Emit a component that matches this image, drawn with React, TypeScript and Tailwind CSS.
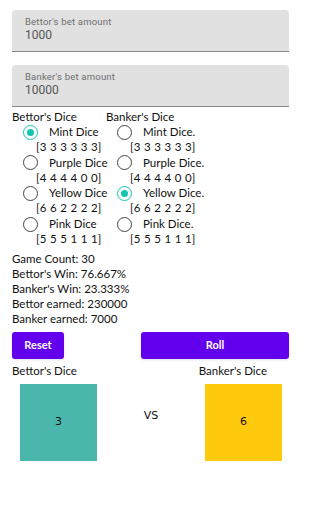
import React from "react";

const DICE = [
  { name: "Mint Dice", faces: "[3 3 3 3 3 3]" },
  { name: "Purple Dice", faces: "[4 4 4 4 0 0]" },
  { name: "Yellow Dice", faces: "[6 6 2 2 2 2]" },
  { name: "Pink Dice", faces: "[5 5 5 1 1 1]" },
];

const STATS = [
  "Game Count: 30",
  "Bettor's Win: 76.667%",
  "Banker's Win: 23.333%",
  "Bettor earned: 230000",
  "Banker earned: 7000",
];

function TextField({ label, value }: { label: string; value: string }) {
  return (
    <div className="h-[42px] rounded-t-[4px] border-b border-[#8a8a8a] bg-[#e1e1e1] px-[13px] pt-[6px] font-['Roboto',sans-serif]">
      <div className="text-[9.5px] leading-[12px] tracking-[0.2px] text-[#6e6e6e]">{label}</div>
      <div className="text-[12px] leading-[15px] text-[#555]">{value}</div>
    </div>
  );
}

function Radio({ checked }: { checked: boolean }) {
  return (
    <span
      className={`flex h-[15px] w-[15px] items-center justify-center rounded-full border-[1.5px] ${
        checked ? "border-[#14c6b2]" : "border-[#444]"
      }`}
    >
      {checked && <span className="h-[7px] w-[7px] rounded-full bg-[#14c6b2]" />}
    </span>
  );
}

function DiceColumn({ title, selected, suffix }: { title: string; selected: number; suffix: string }) {
  return (
    <div className="w-[94px] shrink-0 whitespace-nowrap">
      <div className="h-[14px] leading-[14px]">{title}</div>
      {DICE.map((d, i) => (
        <div key={d.name} className="h-[30.7px]">
          <div className="flex h-[16px] items-center">
            <span className="ml-[11px]">
              <Radio checked={i === selected} />
            </span>
            <span className="ml-[11px] leading-[16px]">
              {d.name}
              {suffix}
            </span>
          </div>
          <div className="ml-[24px] leading-[13px] tracking-[0.3px]">{d.faces}</div>
        </div>
      ))}
    </div>
  );
}

export default function App() {
  return (
    <div className="h-[512px] w-[301px] overflow-hidden bg-white px-[12px] pt-[10px] font-['Lato',sans-serif] text-[11.5px] text-[#111]">
      <TextField label="Bettor's bet amount" value="1000" />
      <div className="mt-[13px]">
        <TextField label="Banker's bet amount" value="10000" />
      </div>

      <div className="mt-[3px] flex">
        <DiceColumn title="Bettor's Dice" selected={0} suffix="" />
        <DiceColumn title="Banker's Dice" selected={2} suffix="." />
      </div>

      <div className="mt-[4px] leading-[15px]">
        {STATS.map((s) => (
          <div key={s}>{s}</div>
        ))}
      </div>

      <div className="mt-[6px] flex justify-between">
        <button className="h-[27px] w-[52px] rounded-[3px] bg-[#6200ee] text-[11px] font-bold text-white shadow-sm">
          Reset
        </button>
        <button className="h-[27px] w-[148px] rounded-[3px] bg-[#6200ee] text-[11px] font-bold text-white shadow-sm">
          Roll
        </button>
      </div>

      <div className="mt-[4px] flex justify-between pr-[22px] leading-[15px]">
        <span>Bettor's Dice</span>
        <span>Banker's Dice</span>
      </div>

      <div className="mt-[6px] flex items-start pl-[8px]">
        <div className="flex h-[77px] w-[77px] items-center justify-center bg-[#4bb6ac] font-['DejaVu_Sans',sans-serif] text-[11px]">
          3
        </div>
        <div className="flex h-[64px] flex-1 items-center justify-center font-['DejaVu_Sans',sans-serif] text-[11px]">
          VS
        </div>
        <div className="mr-[7px] flex h-[77px] w-[77px] items-center justify-center bg-[#ffc90d] font-['DejaVu_Sans',sans-serif] text-[11px]">
          6
        </div>
      </div>
    </div>
  );
}
